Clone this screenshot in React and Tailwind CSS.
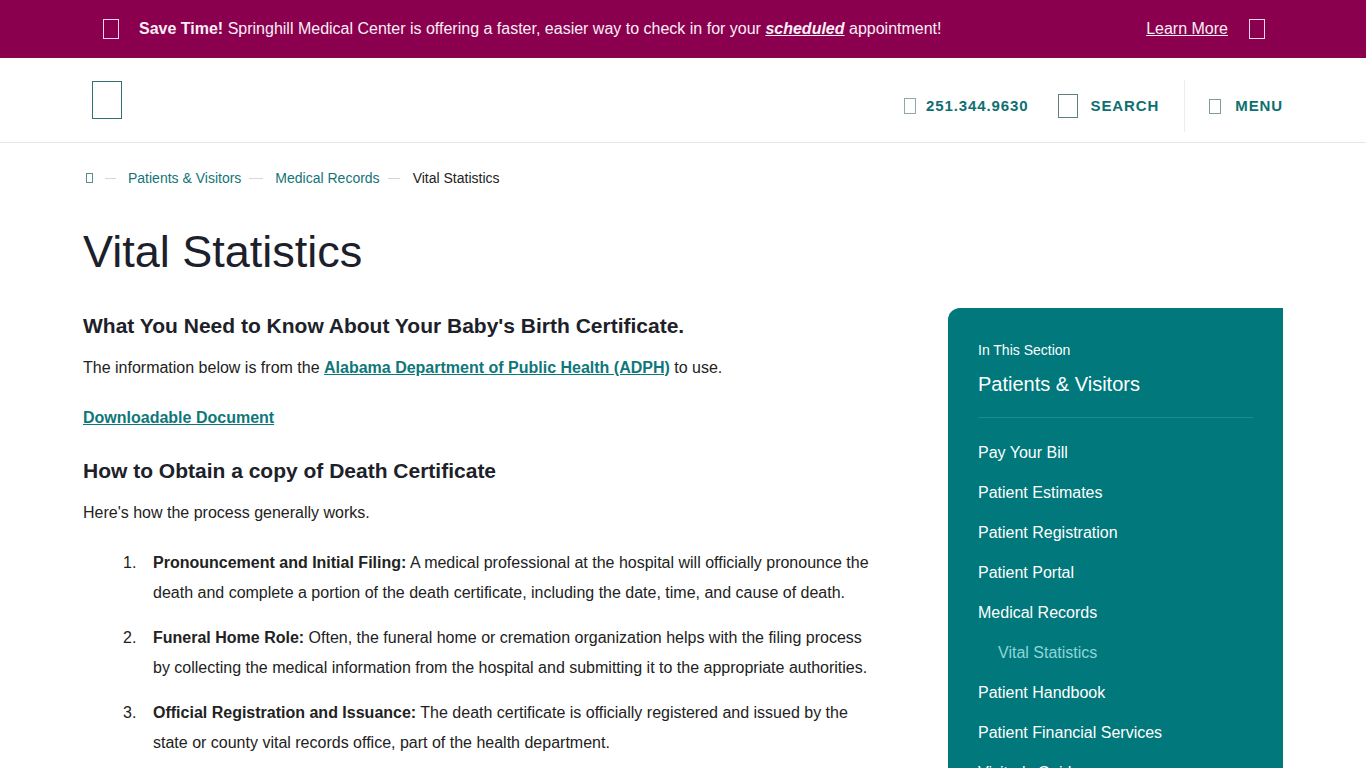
import React from "react";

const Tofu = ({ className }) => (
  <span className={`inline-block shrink-0 border ${className}`} />
);

const sectionLinks = [
  "Pay Your Bill",
  "Patient Estimates",
  "Patient Registration",
  "Patient Portal",
  "Medical Records",
  { label: "Vital Statistics", sub: true },
  "Patient Handbook",
  "Patient Financial Services",
  "Visitor's Guide",
];

const steps = [
  {
    title: "Pronouncement and Initial Filing:",
    body: "A medical professional at the hospital will officially pronounce the death and complete a portion of the death certificate, including the date, time, and cause of death.",
  },
  {
    title: "Funeral Home Role:",
    body: "Often, the funeral home or cremation organization helps with the filing process by collecting the medical information from the hospital and submitting it to the appropriate authorities.",
  },
  {
    title: "Official Registration and Issuance:",
    body: "The death certificate is officially registered and issued by the state or county vital records office, part of the health department.",
  },
];

const App = () => {
  return (
    <div className="min-h-screen bg-white text-[#222] font-['Liberation_Sans',Arial,sans-serif]">
      {/* alert banner */}
      <div className="bg-[#8a004e] h-[58px] text-[#fbeef5]">
        <div className="w-[1200px] mx-auto h-full flex items-center">
          <Tofu className="ml-[20px] w-[16px] h-[20px] border-[#f4d8e8]" />
          <p className="ml-[20px] text-[16px]">
            <b>Save Time!</b> Springhill Medical Center is offering a faster,
            easier way to check in for your{" "}
            <b className="italic underline">scheduled</b> appointment!
          </p>
          <a className="ml-auto text-[16px] underline">Learn More</a>
          <Tofu className="ml-[21px] mr-[18px] w-[16px] h-[20px] border-[#f4d8e8]" />
        </div>
      </div>

      {/* header */}
      <header className="h-[85px] border-b border-[#e6e6e6]">
        <div className="w-[1200px] mx-auto h-full flex items-center">
          <Tofu className="ml-[9px] w-[30px] h-[38px] border-[#2f6f70]" />
          <nav className="ml-auto flex items-center h-full pt-[12px] text-[#0e6f72] font-bold text-[15px] tracking-[0.06em]">
            <div className="flex items-center">
              <Tofu className="w-[12px] h-[16px] border-[#8fa9aa]" />
              <span className="ml-[10px]">251.344.9630</span>
            </div>
            <div className="flex items-center ml-[30px]">
              <Tofu className="w-[20px] h-[24px] border-[#5d7f80]" />
              <span className="ml-[12px]">SEARCH</span>
            </div>
            <div className="ml-[25px] w-px h-[52px] bg-[#ececec]" />
            <div className="flex items-center ml-[24px]">
              <Tofu className="w-[12px] h-[15px] border-[#7f9c9d]" />
              <span className="ml-[14px]">MENU</span>
            </div>
          </nav>
        </div>
      </header>

      <div className="w-[1200px] mx-auto">
        {/* breadcrumb */}
        <div className="pt-[25px] flex items-center text-[14px] leading-[20px]">
          <Tofu className="ml-[3px] w-[7px] h-[10px] border-[#5d8f90]" />
          <span className="ml-[12px] w-[11px] h-px bg-[#d6d6d6]" />
          <a className="ml-[12px] text-[#137577]">Patients &amp; Visitors</a>
          <span className="ml-[8px] w-[14px] h-px bg-[#d6d6d6]" />
          <a className="ml-[12px] text-[#137577]">Medical Records</a>
          <span className="ml-[8px] w-[12px] h-px bg-[#d6d6d6]" />
          <span className="ml-[13px] text-[#222]">Vital Statistics</span>
        </div>

        <h1 className="mt-[37px] text-[45px] leading-[53px] text-[#1b202b]">
          Vital Statistics
        </h1>

        <div className="mt-[30px] flex justify-between items-start">
          <main className="w-[795px] pt-[4px] text-[16px]">
            <h2 className="text-[21px] leading-[28px] font-bold text-[#1d2129]">
              What You Need to Know About Your Baby's Birth Certificate.
            </h2>
            <p className="mt-[13px] leading-[30px]">
              The information below is from the{" "}
              <a className="font-bold underline text-[#0e7779]">
                Alabama Department of Public Health (ADPH)
              </a>{" "}
              to use.
            </p>
            <p className="mt-[20px] leading-[30px]">
              <a className="font-bold underline text-[#0e7779]">
                Downloadable Document
              </a>
            </p>
            <h2 className="mt-[24px] text-[21px] leading-[28px] font-bold text-[#1d2129]">
              How to Obtain a copy of Death Certificate
            </h2>
            <p className="mt-[13px] leading-[30px]">
              Here's how the process generally works.
            </p>
            <ol className="mt-[20px] flex flex-col gap-[15px]">
              {steps.map((s, i) => (
                <li key={i} className="flex leading-[30px]">
                  <span className="w-[70px] shrink-0 pl-[40px]">{i + 1}.</span>
                  <span>
                    <b>{s.title}</b> {s.body}
                  </span>
                </li>
              ))}
            </ol>
          </main>

          <aside className="w-[335px] bg-[#00787c] rounded-tl-[12px] px-[30px] pt-[32px] pb-[30px] text-white">
            <p className="text-[14px] leading-[20px]">In This Section</p>
            <p className="mt-[10px] text-[20px] leading-[28px]">
              Patients &amp; Visitors
            </p>
            <div className="mt-[19px] h-px bg-[#168d91]" />
            <ul className="mt-[15px]">
              {sectionLinks.map((l) =>
                typeof l === "string" ? (
                  <li key={l} className="py-[8px] text-[16px] leading-[24px]">
                    {l}
                  </li>
                ) : (
                  <li
                    key={l.label}
                    className="py-[8px] pl-[20px] text-[16px] leading-[24px] text-[#8fd6d8]"
                  >
                    {l.label}
                  </li>
                )
              )}
            </ul>
          </aside>
        </div>
      </div>
    </div>
  );
};

export default App;
